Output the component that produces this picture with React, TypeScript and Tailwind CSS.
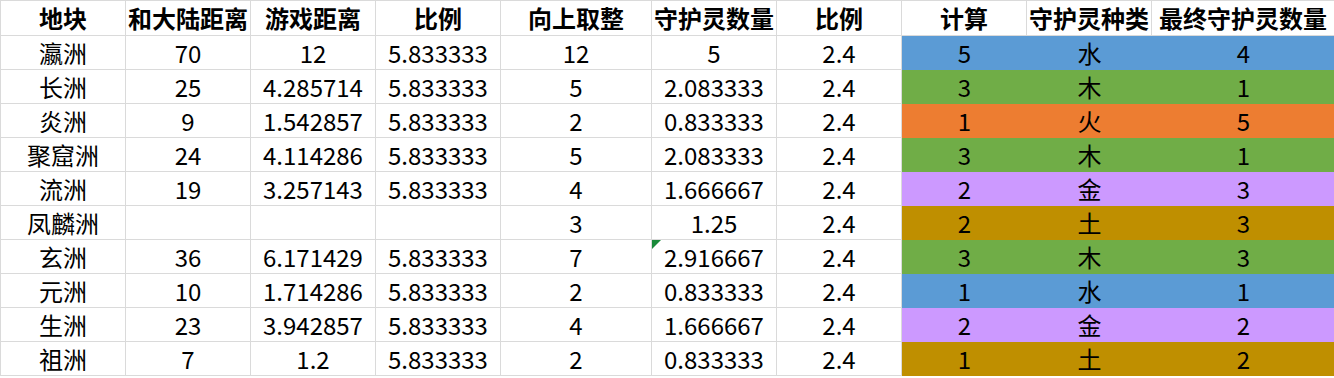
import React from 'react';

type Row = {
  name: string;
  dist: string;
  game: string;
  ratio: string;
  ceil: string;
  count: string;
  ratio2: string;
  calc: string;
  kind: string;
  final: string;
  color: string;
  flag?: boolean;
};

const rows: Row[] = [
  { name: '瀛洲', dist: '70', game: '12', ratio: '5.833333', ceil: '12', count: '5', ratio2: '2.4', calc: '5', kind: '水', final: '4', color: 'bg-[#5b9bd5]' },
  { name: '长洲', dist: '25', game: '4.285714', ratio: '5.833333', ceil: '5', count: '2.083333', ratio2: '2.4', calc: '3', kind: '木', final: '1', color: 'bg-[#70ad47]' },
  { name: '炎洲', dist: '9', game: '1.542857', ratio: '5.833333', ceil: '2', count: '0.833333', ratio2: '2.4', calc: '1', kind: '火', final: '5', color: 'bg-[#ed7d31]' },
  { name: '聚窟洲', dist: '24', game: '4.114286', ratio: '5.833333', ceil: '5', count: '2.083333', ratio2: '2.4', calc: '3', kind: '木', final: '1', color: 'bg-[#70ad47]' },
  { name: '流洲', dist: '19', game: '3.257143', ratio: '5.833333', ceil: '4', count: '1.666667', ratio2: '2.4', calc: '2', kind: '金', final: '3', color: 'bg-[#cc99ff]' },
  { name: '凤麟洲', dist: '', game: '', ratio: '', ceil: '3', count: '1.25', ratio2: '2.4', calc: '2', kind: '土', final: '3', color: 'bg-[#bf8f00]' },
  { name: '玄洲', dist: '36', game: '6.171429', ratio: '5.833333', ceil: '7', count: '2.916667', ratio2: '2.4', calc: '3', kind: '木', final: '3', color: 'bg-[#70ad47]', flag: true },
  { name: '元洲', dist: '10', game: '1.714286', ratio: '5.833333', ceil: '2', count: '0.833333', ratio2: '2.4', calc: '1', kind: '水', final: '1', color: 'bg-[#5b9bd5]' },
  { name: '生洲', dist: '23', game: '3.942857', ratio: '5.833333', ceil: '4', count: '1.666667', ratio2: '2.4', calc: '2', kind: '金', final: '2', color: 'bg-[#cc99ff]' },
  { name: '祖洲', dist: '7', game: '1.2', ratio: '5.833333', ceil: '2', count: '0.833333', ratio2: '2.4', calc: '1', kind: '土', final: '2', color: 'bg-[#bf8f00]' },
];

const headers = ['地块', '和大陆距离', '游戏距离', '比例', '向上取整', '守护灵数量', '比例', '计算', '守护灵种类', '最终守护灵数量'];

const cell = 'flex items-center justify-center border-r border-b border-[#dadada] whitespace-nowrap';

export default function App() {
  return (
    <div className="w-[1334px] h-[378px] bg-white overflow-hidden text-black text-[24px] leading-none" style={{ fontFamily: '"Noto Sans CJK SC", "Noto Sans", sans-serif' }}>
      <div className="grid grid-cols-[125px_125px_125px_125px_151px_125px_125px_125px_125px_183px] border-l border-t border-[#dadada]">
        {headers.map((h, i) => (
          <div key={i} className={`${cell} h-[35px] font-bold`}>{h}</div>
        ))}
        {rows.map((r) => (
          <React.Fragment key={r.name}>
            <div className={`${cell} h-[34px]`}>{r.name}</div>
            <div className={`${cell} h-[34px]`}>{r.dist}</div>
            <div className={`${cell} h-[34px]`}>{r.game}</div>
            <div className={`${cell} h-[34px]`}>{r.ratio}</div>
            <div className={`${cell} h-[34px]`}>{r.ceil}</div>
            <div className={`${cell} h-[34px] relative`}>
              {r.flag && (
                <span className="absolute left-0 top-0 w-0 h-0 border-t-[9px] border-r-[9px] border-t-[#1a8a3a] border-r-transparent" />
              )}
              {r.count}
            </div>
            <div className={`${cell} h-[34px]`}>{r.ratio2}</div>
            <div className={`flex items-center justify-center h-[34px] ${r.color}`}>{r.calc}</div>
            <div className={`flex items-center justify-center h-[34px] ${r.color}`}>{r.kind}</div>
            <div className={`flex items-center justify-center h-[34px] ${r.color}`}>{r.final}</div>
          </React.Fragment>
        ))}
      </div>
    </div>
  );
}
